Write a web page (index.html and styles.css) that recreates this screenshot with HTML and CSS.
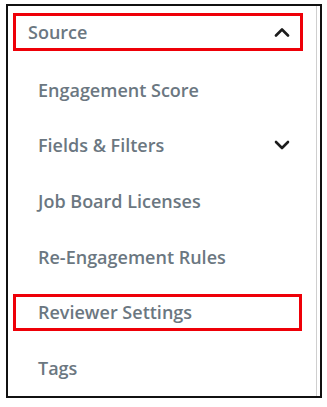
FILE: index.html
```html
<!DOCTYPE html>
<html>
<head>
<meta charset="utf-8">
<link rel="stylesheet" href="styles.css">
</head>
<body>
<div class="panel">
  <div class="inner">
    <div class="header">
      <span class="label">Source</span>
      <svg class="chev" width="16" height="10" viewBox="0 0 16 10"><polyline points="2,8.5 8,2.5 14,8.5" fill="none" stroke="#1c1c1c" stroke-width="2.6" stroke-linecap="round" stroke-linejoin="round"/></svg>
    </div>
    <ul class="list">
      <li class="item">Engagement Score</li>
      <li class="item">Fields &amp; Filters
        <svg class="chev" width="16" height="10" viewBox="0 0 16 10"><polyline points="2,2 8,8 14,2" fill="none" stroke="#1c1c1c" stroke-width="2.6" stroke-linecap="round" stroke-linejoin="round"/></svg>
      </li>
      <li class="item">Job Board Licenses</li>
      <li class="item">Re-Engagement Rules</li>
      <li class="item hl">Reviewer Settings</li>
      <li class="item">Tags</li>
    </ul>
  </div>
</div>
</body>
</html>
```
FILE: styles.css
```css
html, body {
  margin: 0;
  padding: 0;
  background: #ffffff;
}
body {
  font-family: "Open Sans", "Noto Sans", sans-serif;
}
.panel {
  margin: 4px 0 0 6px;
  width: 316px;
  height: 394px;
  box-sizing: border-box;
  border: 2px solid #111111;
  background: #ffffff;
}
.inner {
  width: 309px;
  height: 100%;
  border-right: 1px solid #cfcfcf;
  padding-top: 7px;
  box-sizing: border-box;
}
.header {
  margin-left: 5px;
  width: 290px;
  height: 38px;
  box-sizing: border-box;
  border: 3px solid #ee0008;
  display: flex;
  align-items: center;
  justify-content: space-between;
  padding: 0 10px 0 12px;
}
.label, .item {
  font-size: 18px;
  font-weight: 600;
  color: #6b7781;
}
.list {
  list-style: none;
  margin: 20px 0 0 0;
  padding: 0;
  display: flex;
  flex-direction: column;
  gap: 18.7px;
}
.item {
  margin-left: 5px;
  width: 289px;
  height: 37px;
  box-sizing: border-box;
  border: 3px solid transparent;
  padding: 0 9px 0 22px;
  display: flex;
  align-items: center;
  justify-content: space-between;
}
.item.hl {
  border-color: #ee0008;
}
.chev {
  display: block;
  flex: none;
}
```
